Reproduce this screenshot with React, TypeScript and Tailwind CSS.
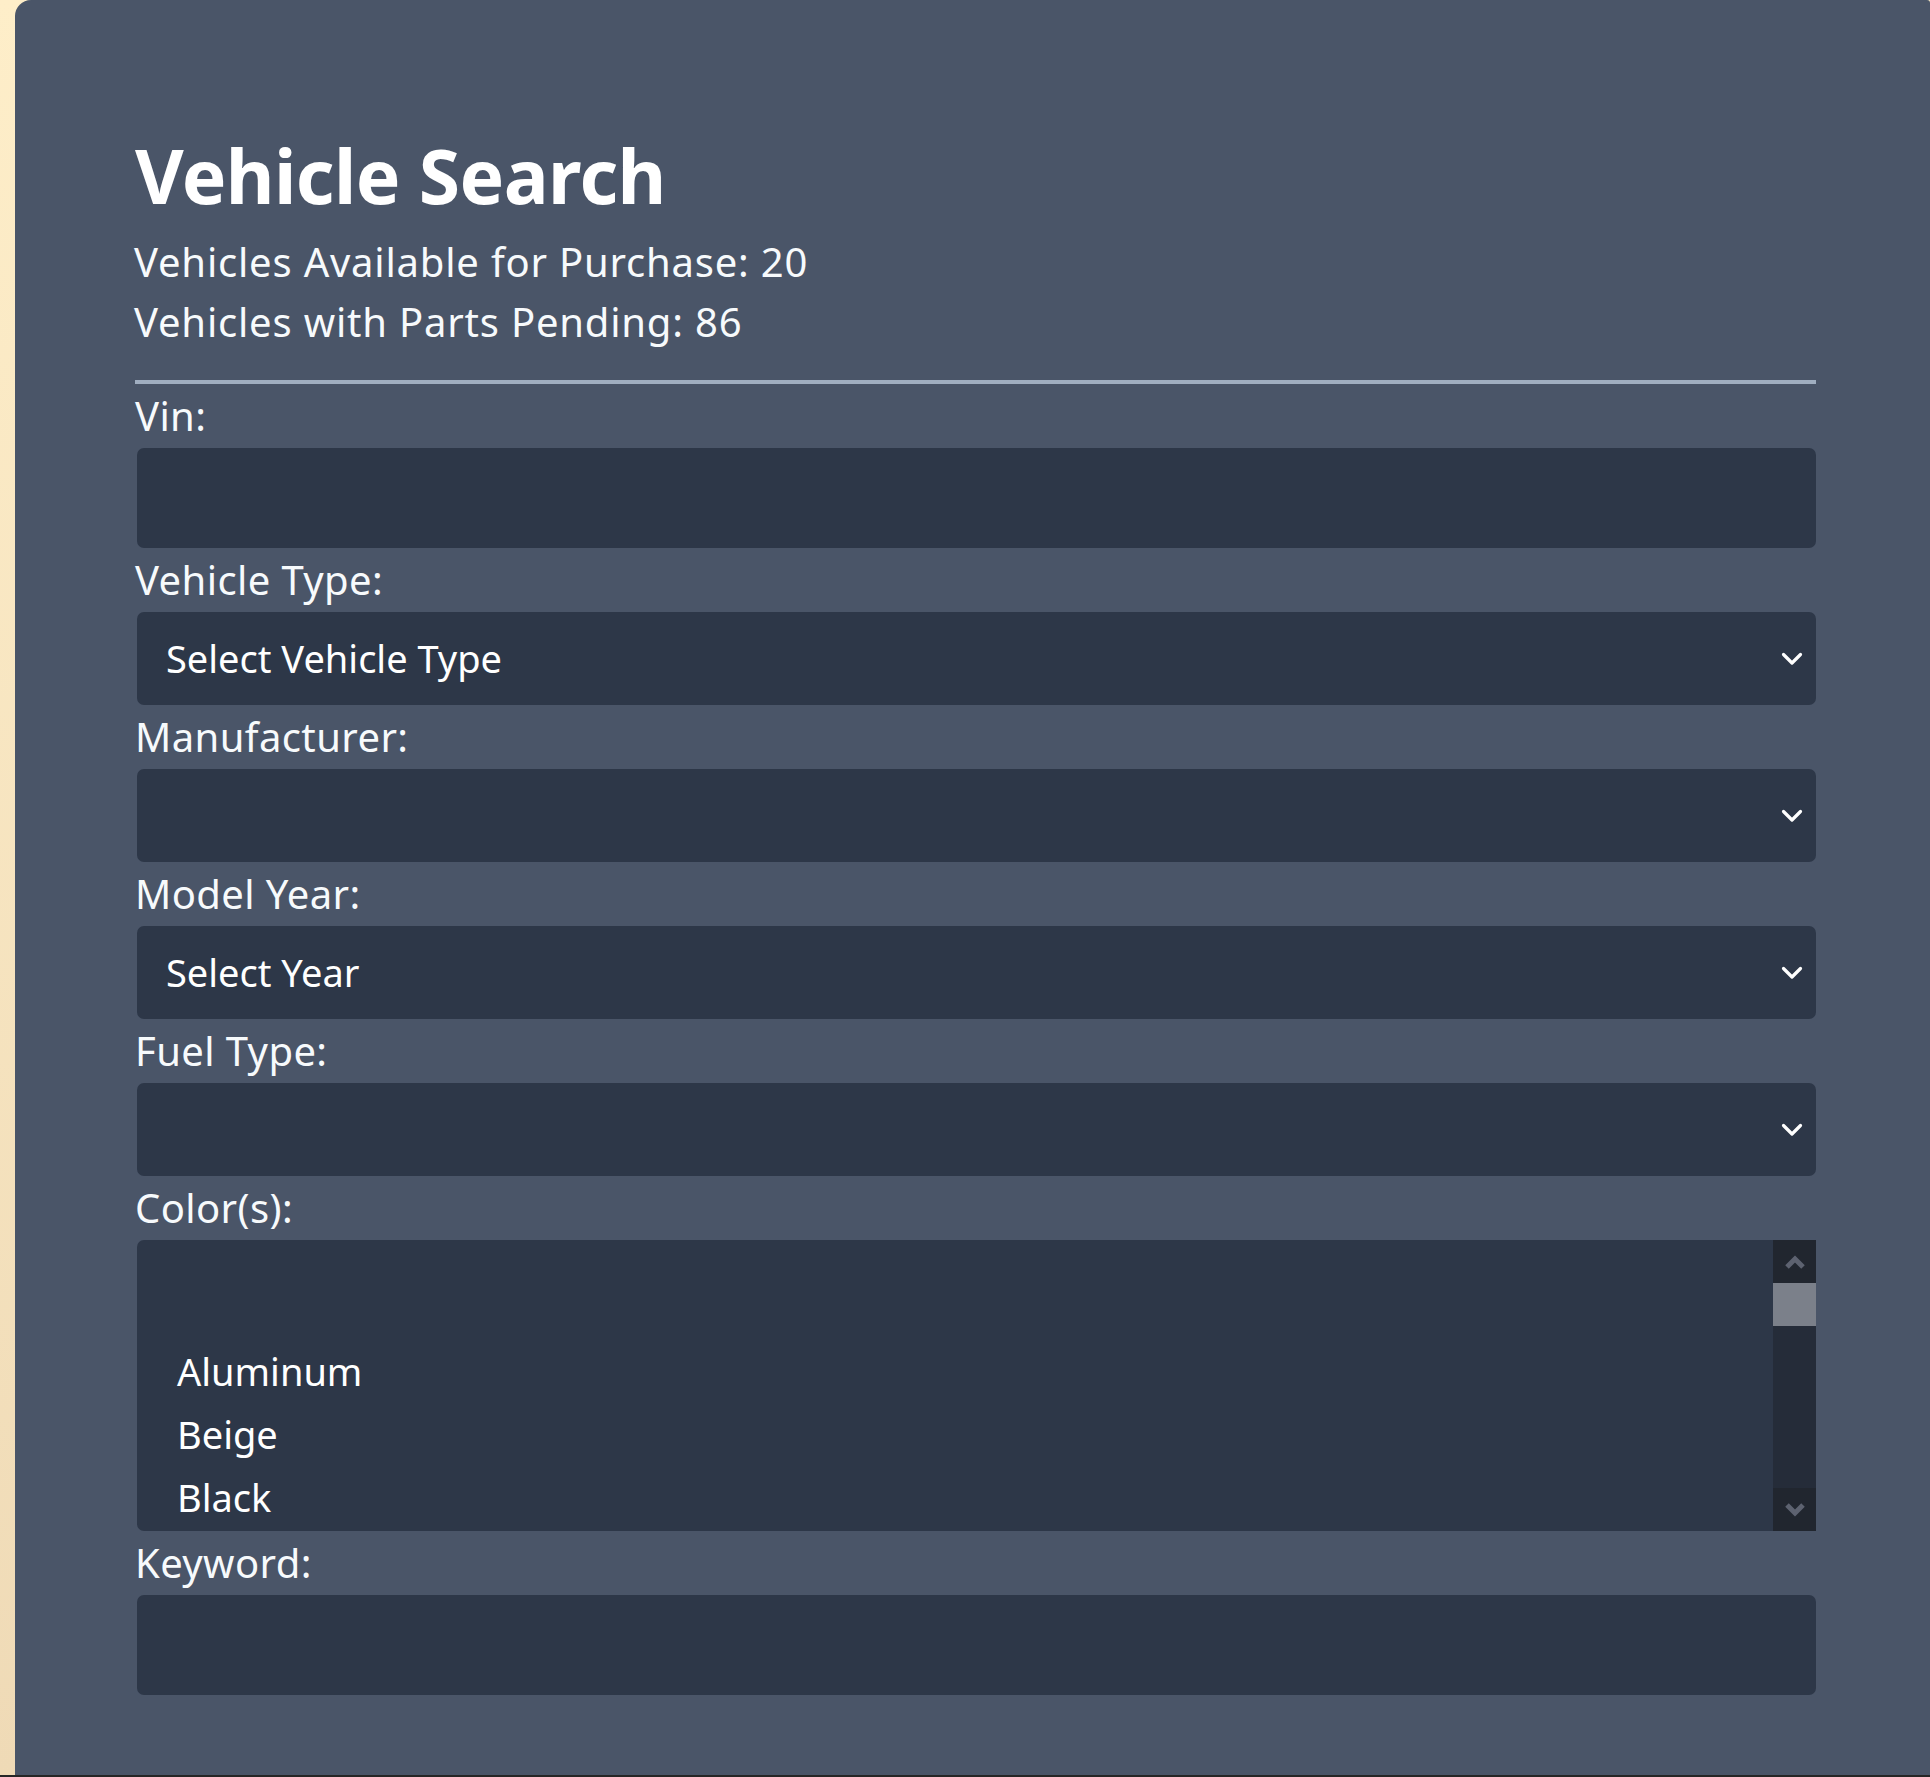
import React from "react";

const font = { fontFamily: '"Noto Sans", "Open Sans", sans-serif' };

function Chevron() {
  return (
    <svg width="22" height="14" viewBox="0 0 22 14" fill="none" className="absolute right-[13px] top-1/2 -translate-y-1/2">
      <path d="M2.5 2.5 L11 11 L19.5 2.5" stroke="#ffffff" strokeWidth="3.2" strokeLinecap="round" strokeLinejoin="round" />
    </svg>
  );
}

function Field({ label, children }: { label: string; children: React.ReactNode }) {
  return (
    <div>
      <label className="-ml-[2px] block text-[40px] leading-[64px] tracking-[0.4px] text-[#f7fafc]">{label}</label>
      {children}
    </div>
  );
}

function TextBox() {
  return <div className="h-[100px] rounded-[7px] bg-[#2d3748]" />;
}

function SelectBox({ value }: { value?: string }) {
  return (
    <div className="relative flex h-[93px] items-center rounded-[7px] bg-[#2d3748] pl-[29px] text-[38px] text-white">
      {value}
      <Chevron />
    </div>
  );
}

function ColorList() {
  const colors = ["", "Aluminum", "Beige", "Black"];
  return (
    <div className="flex h-[291px] overflow-hidden rounded-l-[7px] bg-[#2d3748]">
      <div className="flex-1 pl-[40px] pt-[37px] text-[38px] leading-[63px] text-white">
        {colors.map((c, i) => (
          <div key={i} className="h-[63px]">{c}</div>
        ))}
      </div>
      {/* scrollbar */}
      <div className="flex w-[43px] flex-col bg-[#252c39]">
        <div className="flex h-[43px] items-center justify-center bg-[#21262f]">
          <svg width="22" height="16" viewBox="0 0 22 16" fill="none">
            <path d="M3 13 L11 5 L19 13" stroke="#5d6270" strokeWidth="5" strokeLinejoin="miter" />
          </svg>
        </div>
        <div className="h-[43px] bg-[#7b808a]" />
        <div className="flex-1" />
        <div className="flex h-[43px] items-center justify-center bg-[#21262f]">
          <svg width="22" height="16" viewBox="0 0 22 16" fill="none">
            <path d="M3 3 L11 11 L19 3" stroke="#5d6270" strokeWidth="5" strokeLinejoin="miter" />
          </svg>
        </div>
      </div>
    </div>
  );
}

export default function App() {
  return (
    <div className="h-[1777px] w-[1930px] overflow-hidden bg-[#262626]" style={font}>
      <div className="flex h-[1775px] bg-gradient-to-b from-[#feeec9] to-[#efdab6]">
        <div className="ml-[15px] flex-1 rounded-tl-[16px] rounded-tr-[3px] bg-[#4a5568] pb-[80px] pl-[121px] pr-[114px] pt-[130px]">
          <h1 className="-ml-[1px] text-[75px] font-bold leading-[90px] tracking-[-0.6px] text-white">Vehicle Search</h1>
          <div className="-ml-[2px] mt-[12px] text-[40px] leading-[60px] tracking-[0.8px] text-[#f7fafc]">
            <p>Vehicles Available for Purchase: 20</p>
            <p>Vehicles with Parts Pending: 86</p>
          </div>
          <div className="-ml-[1px] mt-[28px] h-[4px] bg-[#a0aec0]" />
          <div className="pl-[1px]">
            <Field label="Vin:">
              <TextBox />
            </Field>
            <Field label="Vehicle Type:">
              <SelectBox value="Select Vehicle Type" />
            </Field>
            <Field label="Manufacturer:">
              <SelectBox />
            </Field>
            <Field label="Model Year:">
              <SelectBox value="Select Year" />
            </Field>
            <Field label="Fuel Type:">
              <SelectBox />
            </Field>
            <Field label="Color(s):">
              <ColorList />
            </Field>
            <Field label="Keyword:">
              <TextBox />
            </Field>
          </div>
        </div>
      </div>
    </div>
  );
}
